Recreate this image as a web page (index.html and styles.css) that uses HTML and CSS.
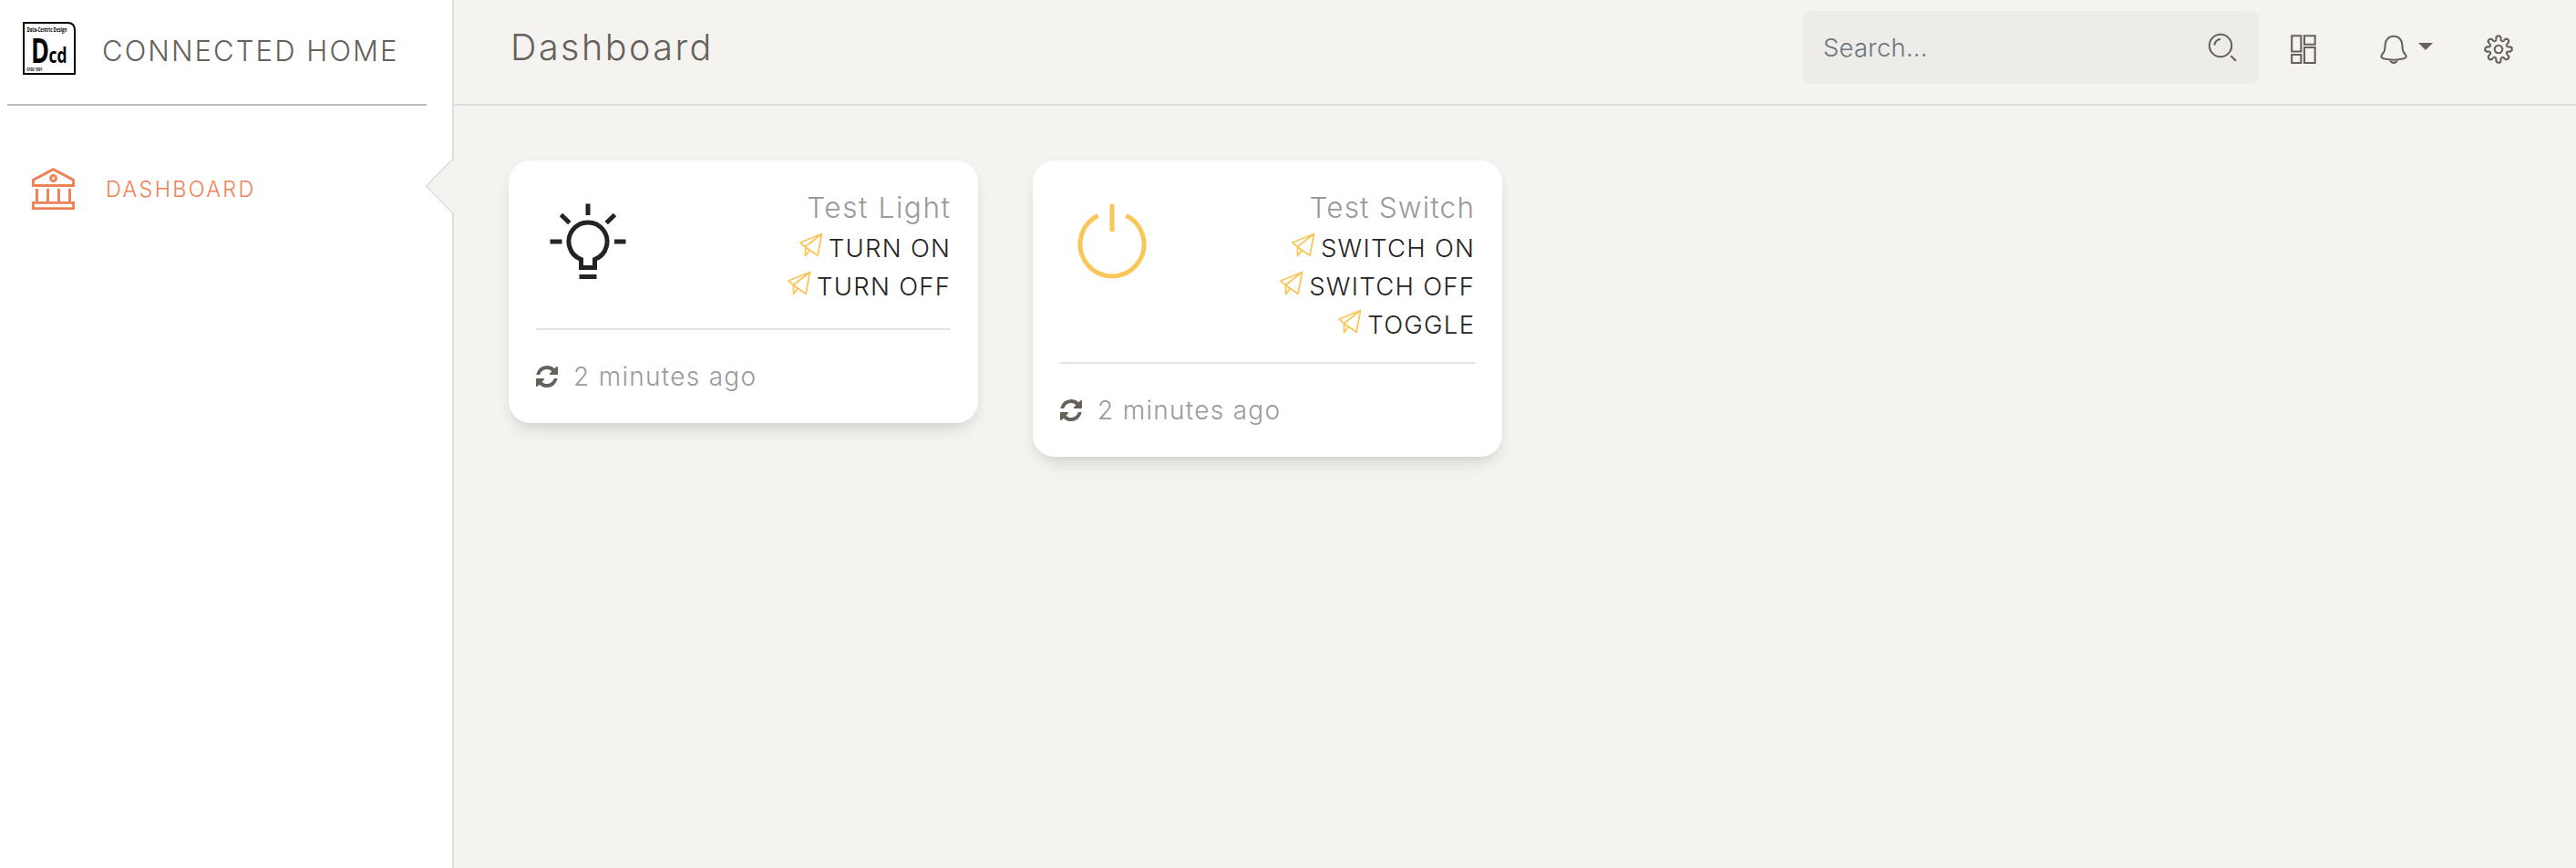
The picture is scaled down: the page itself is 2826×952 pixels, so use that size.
FILE: index.html
```html
<!DOCTYPE html>
<html lang="en">
<head>
<meta charset="utf-8">
<title>Connected Home</title>
<link rel="stylesheet" href="styles.css">
</head>
<body>
<svg class="defs" width="0" height="0">
  <symbol id="plane" viewBox="0 0 26 27">
    <path d="M1 11 24.500 1.500 20 25.300 6.200 15.700ZM6.200 15.700 24.500 1.500M6.500 15.700V25.500L11.500 19.400" fill="none" stroke="currentColor" stroke-width="1.800" stroke-linejoin="round"/>
  </symbol>
  <symbol id="refresh" viewBox="0 0 1536 1536">
    <path fill="currentColor" d="M1511 928q0 5-1 7-64 268-268 434.500t-478 166.500q-146 0-282.500-55t-243.500-157l-129 129q-19 19-45 19t-45-19-19-45v-448q0-26 19-45t45-19h448q26 0 45 19t19 45-19 45l-137 137q71 66 161 102t187 36q134 0 250-65t186-179q11-17 53-117 8-23 30-23h192q13 0 22.500 9.500t9.500 22.500zm25-800v448q0 26-19 45t-45 19h-448q-26 0-45-19t-19-45 19-45l138-138q-148-137-349-137-134 0-250 65t-186 179q-11 17-53 117-8 23-30 23h-199q-13 0-22.500-9.500t-9.500-22.500v-7q65-268 270-434.500t480-166.500q146 0 284 55.500t245 156.500l130-129q19-19 45-19t45 19 19 45z"/>
  </symbol>
</svg>
<div class="app">
  <aside class="sidebar">
    <div class="brand">
      <svg class="logo" viewBox="0 0 58 58">
        <path d="M1 1H49Q57 1 57 9V57H1Z" fill="#fff" stroke="#000" stroke-width="2"/>
        <text x="4.500" y="10.500" font-size="6.500" font-weight="700" textLength="44" lengthAdjust="spacingAndGlyphs">Data-Centric Design</text>
        <text x="9" y="44.500" font-size="38" font-weight="700" textLength="20" lengthAdjust="spacingAndGlyphs">D</text>
        <text x="28.500" y="44.500" font-size="23" font-weight="700" textLength="20" lengthAdjust="spacingAndGlyphs">cd</text>
        <text x="4.500" y="53.500" font-size="4.500" font-weight="700" textLength="17" lengthAdjust="spacingAndGlyphs">0100 1001</text>
      </svg>
      <span class="brand-name">CONNECTED HOME</span>
    </div>
    <a class="nav-item">
      <svg class="bank" viewBox="0 0 47 46">
        <g fill="none" stroke="currentColor" stroke-width="2.900">
          <path d="M1.400 19.500V13.500L23.500 1.700 45.600 13.500V19.500Z"/>
          <circle cx="23.500" cy="11.500" r="3"/>
          <path d="M5.500 23V38M17.500 23V38M29.500 23V38M41.500 23V38M1.400 38.400H45.600V44.600H1.400Z"/>
        </g>
      </svg>
      <span class="nav-label">DASHBOARD</span>
    </a>
    <svg class="notch" viewBox="0 0 32 64">
      <path d="M32 2 1.500 32 32 62Z" fill="#f4f3ef"/>
      <path d="M31 2 1.500 32 31 62" fill="none" stroke="#ddd" stroke-width="1.500"/>
    </svg>
  </aside>
  <div class="main">
    <header class="topbar">
      <h1 class="title">Dashboard</h1>
      <div class="search">
        <span class="placeholder">Search...</span>
        <svg class="search-icon" viewBox="0 0 32 32" fill="none" stroke="currentColor" stroke-width="2.100">
          <circle cx="14" cy="14" r="12.200"/><path d="M7.500 13.500A6.500 6.500 0 0 1 14 7M25.300 25.200 31 30.700"/>
        </svg>
      </div>
      <svg class="icon grid" viewBox="0 0 28 32" fill="none" stroke="currentColor" stroke-width="2.100">
        <path d="M1.200 1.300H11.400V18.500H1.200ZM15 1.300H26.700V10.700H15ZM15 14H26.700V31H15ZM1.200 22H11.400V31H1.200Z"/>
      </svg>
      <svg class="icon bell" viewBox="0 0 30 32" fill="none" stroke="currentColor" stroke-width="2.100">
        <path d="M15 1.800C9.500 1.800 5.700 6 5.600 11.500C5.500 18 4.500 19 2.200 21.800C.500 24 1.300 25.500 4 26.300C10.500 28 19.500 28 26 26.300C28.700 25.500 29.500 24 27.800 21.800C25.500 19 24.500 18 24.400 11.500C24.300 6 20.500 1.800 15 1.800ZM10.800 27.500C12 32 18 32 19.200 27.500"/>
      </svg>
      <svg class="caret" viewBox="0 0 16 8"><path d="M0 0H16L8 8Z" fill="currentColor"/></svg>
      <svg class="icon gear" viewBox="-16 -16 32 32" fill="none" stroke="currentColor" stroke-width="2.100">
        <circle r="4.300"/>
        <path id="tooth" d="M-2.600-10.800V-12.200a2.600 2.600 0 0 1 5.200 0V-10.800A1.800 1.800 0 0 0 5.800-9.470"/>
        <use href="#tooth" transform="rotate(45)"/><use href="#tooth" transform="rotate(90)"/><use href="#tooth" transform="rotate(135)"/><use href="#tooth" transform="rotate(180)"/><use href="#tooth" transform="rotate(225)"/><use href="#tooth" transform="rotate(270)"/><use href="#tooth" transform="rotate(315)"/>
      </svg>
    </header>
    <main class="cards">
      <article class="card">
        <div class="card-top">
          <svg class="device bulb" viewBox="0 0 84 84" fill="none" stroke="currentColor" stroke-width="5">
            <path d="M34.500 61.500A21 21 0 1 1 49.500 61.500V70.500H34.500ZM42 .500V13M.500 42H13.500M71 42H83.500M12.500 12.500 21.800 21.500M71.500 12.500 62.200 21.500M32.500 80.500H51.500"/>
          </svg>
          <div class="info">
            <span class="name name-light">Test Light</span>
            <a class="action"><svg class="plane"><use href="#plane"/></svg><span class="label">TURN ON</span></a>
            <a class="action"><svg class="plane"><use href="#plane"/></svg><span class="label">TURN OFF</span></a>
          </div>
        </div>
        <div class="stats"><svg class="refresh"><use href="#refresh"/></svg><span class="ago">2 minutes ago</span></div>
      </article>
      <article class="card card-switch">
        <div class="card-top">
          <svg class="device power" viewBox="0 0 84 84" fill="none" stroke="currentColor" stroke-width="5">
            <path d="M26.500 13.500A35 35 0 1 0 57.500 13.500M42 1V31"/>
          </svg>
          <div class="info">
            <span class="name name-switch">Test Switch</span>
            <a class="action"><svg class="plane"><use href="#plane"/></svg><span class="label">SWITCH ON</span></a>
            <a class="action"><svg class="plane"><use href="#plane"/></svg><span class="label">SWITCH OFF</span></a>
            <a class="action"><svg class="plane"><use href="#plane"/></svg><span class="label">TOGGLE</span></a>
          </div>
        </div>
        <div class="stats"><svg class="refresh"><use href="#refresh"/></svg><span class="ago">2 minutes ago</span></div>
      </article>
    </main>
  </div>
</div>
</body>
</html>
```
FILE: styles.css
```css
* { box-sizing: border-box; }
body { margin: 0; background: #f4f3ef; color: #66615b; font-family: Inter, "Liberation Sans", sans-serif; font-weight: 350; }
svg { display: block; flex: none; }
.defs { position: absolute; }
.app { display: flex; height: 952px; overflow: hidden; }
.sidebar { position: relative; width: 498px; flex: none; background: #fff; border-right: 2px solid #ddd; }
.brand { display: flex; align-items: center; height: 116px; margin: 0 28px 0 8px; padding: 0 0 9px 17px; border-bottom: 2px solid #bfbdb8; }
.logo { width: 58px; height: 58px; font-family: "Open Sans", sans-serif; }
.brand-name { margin: 7px 0 0 29px; font-size: 31px; line-height: 40px; letter-spacing: 2.100px; white-space: nowrap; }
.nav-item { display: flex; align-items: center; height: 60px; margin-top: 61px; padding-left: 35px; color: #ef8157; }
.bank { width: 47px; height: 46px; }
.nav-label { margin-left: 34px; font-size: 23.500px; letter-spacing: 2.250px; }
.notch { position: absolute; right: -2px; top: 172px; width: 32px; height: 64px; }
.main { flex: 1; min-width: 0; }
.topbar { display: flex; align-items: flex-start; height: 116px; padding-right: 69px; border-bottom: 2px solid #ddd; }
.title { flex: 1; margin: 27px 0 0 62px; font-size: 39.500px; line-height: 50px; font-weight: 350; letter-spacing: 2.500px; }
.search { display: flex; justify-content: space-between; width: 500px; height: 80px; margin-top: 12px; padding: 24px 24px 0 22px; border-radius: 8px; background: #eeece8; }
.placeholder { font-size: 27.500px; line-height: 32px; letter-spacing: 0.200px; color: #6c757d; }
.search-icon { width: 32px; height: 32px; }
.icon { height: 32px; margin-top: 38px; }
.grid { width: 28px; margin-left: 35px; }
.bell { width: 30px; margin-left: 70px; }
.caret { width: 16px; height: 8px; margin: 47px 0 0 12px; }
.gear { width: 32px; margin-left: 56px; }
.cards { display: flex; align-items: flex-start; gap: 60px; padding: 60px; }
.card { width: 515px; height: 288px; padding: 30px; border-radius: 24px; background: #fff; box-shadow: 0 12px 20px -8px rgba(0,0,0,.15), 0 2px 12px rgba(0,0,0,.04); }
.card-switch { height: 325px; }
.card-top { display: flex; justify-content: space-between; height: 156px; border-bottom: 2px solid #e3e3e3; }
.card-switch .card-top { height: 193px; }
.device { width: 84px; height: 84px; margin: 17px 0 0 15px; }
.bulb { color: #252422; }
.power { color: #fbc658; }
.info { display: flex; flex-direction: column; align-items: flex-end; white-space: nowrap; }
.name { margin-top: 0; font-size: 31.500px; line-height: 44px; color: #9a9a9a; }
.name-light { letter-spacing: 1.600px; margin-right: -0.600px; }
.name-switch { letter-spacing: 1.200px; margin-right: -0.200px; }
.action { display: flex; align-items: flex-start; height: 42px; color: #252422; font-size: 27.500px; line-height: 44px; }
.label { letter-spacing: 1.300px; margin-right: -0.300px; }
.plane { width: 26px; height: 27px; margin: 5px 6px 0 0; color: #fbc658; }
.stats { display: flex; align-items: center; padding-top: 31px; }
.refresh { width: 24px; height: 24px; margin-right: 17px; }
.ago { font-size: 28px; line-height: 40px; letter-spacing: 1.300px; color: #9a9a9a; }
```
